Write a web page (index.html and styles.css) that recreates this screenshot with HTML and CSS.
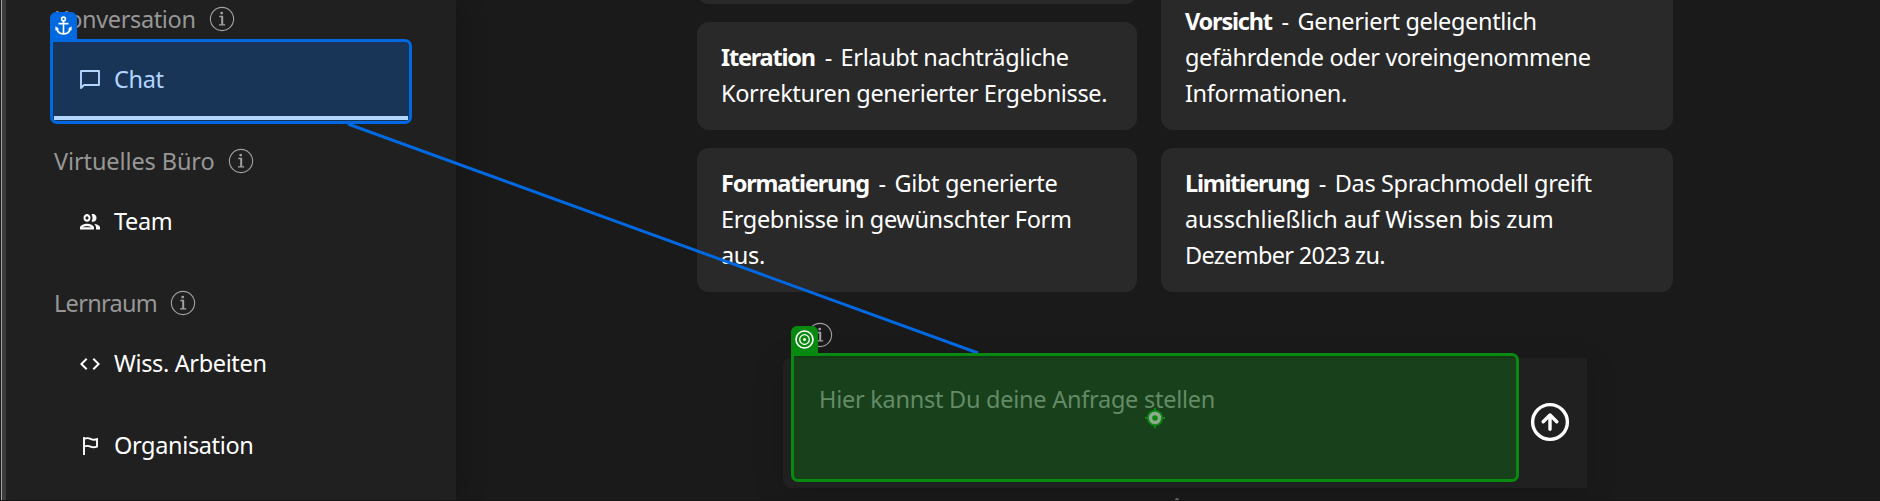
FILE: index.html
```html
<!DOCTYPE html>
<html lang="de">
<head>
<meta charset="utf-8">
<title>Chat</title>
<link rel="stylesheet" href="styles.css">
</head>
<body>
<svg class="defs" width="0" height="0">
  <symbol id="info" viewBox="0 0 26 26">
    <circle cx="13" cy="13" r="11.6" fill="none" stroke="currentColor" stroke-width="1.1"/>
    <circle cx="12.7" cy="7.1" r="1.4" fill="currentColor"/>
    <path d="M10.300 10.500H13.400V18.400M10 18.900H16.200" fill="none" stroke="currentColor" stroke-width="1.300"/>
    <path d="M13.200 10.200V18.800" stroke="currentColor" stroke-width="1.900"/>
  </symbol>
</svg>
<div class="app">
  <nav class="sidebar">
    <div class="label"><span>Konversation</span><svg class="info"><use href="#info"/></svg></div>
    <a class="item item-active">
      <svg class="icon" viewBox="0 0 24 24"><path d="M3 3H21V17H6L3 20Z" fill="none" stroke="currentColor" stroke-width="1.900" stroke-linejoin="round"/></svg>
      <span>Chat</span>
    </a>
    <div class="label"><span class="loose">Virtuelles Büro</span><svg class="info"><use href="#info"/></svg></div>
    <a class="item">
      <svg class="icon" viewBox="0 0 24 24"><path transform="translate(0 -1.400) scale(1 1.100)" fill="currentColor" d="M9 13.750c-2.340 0-7 1.170-7 3.500V19h14v-1.750c0-2.330-4.660-3.500-7-3.500zM4.340 17c.84-.58 2.870-1.250 4.660-1.250s3.820.67 4.660 1.250H4.340zM9 12c1.930 0 3.500-1.570 3.500-3.500S10.930 5 9 5 5.500 6.570 5.500 8.500 7.070 12 9 12zm0-5c.83 0 1.500.67 1.500 1.500S9.830 10 9 10s-1.500-.67-1.500-1.500S8.170 7 9 7zm7.040 6.810c1.160.84 1.960 1.960 1.960 3.440V19h4v-1.750c0-2.020-3.500-3.170-5.960-3.440zM15 12c1.930 0 3.500-1.570 3.500-3.500S16.930 5 15 5c-.54 0-1.040.13-1.500.35.63.89 1 1.980 1 3.150s-.37 2.260-1 3.150c.46.22.96.35 1.500.35z"/></svg>
      <span>Team</span>
    </a>
    <div class="label"><span class="tight">Lernraum</span><svg class="info"><use href="#info"/></svg></div>
    <a class="item">
      <svg class="icon" viewBox="0 0 24 24"><path fill="currentColor" d="M9.400 16.600 4.800 12l4.600-4.600L8 6l-6 6 6 6zm5.200 0 4.600-4.600-4.600-4.600L16 6l6 6-6 6z"/></svg>
      <span>Wiss. Arbeiten</span>
    </a>
    <a class="item">
      <svg class="icon" viewBox="0 0 24 24"><path d="M6 21V3M6 5C8.500 3.800 10.500 3.800 12.500 4.800S17 6 19 5.200V12.600C17 13.400 14.500 13.600 12.500 12.600S8.500 11.600 6 12.400" fill="none" stroke="currentColor" stroke-width="1.900"/></svg>
      <span>Organisation</span>
    </a>
  </nav>

  <main class="main">
    <section class="cards">
      <div class="column">
        <article class="card card-cut"></article>
        <article class="card"><b>Iteration</b> <span class="dash">-</span> Erlaubt nachträgliche<br>Korrekturen generierter Ergebnisse.</article>
        <article class="card"><b>Formatierung</b> <span class="dash">-</span> Gibt generierte<br>Ergebnisse in gewünschter Form<br>aus.</article>
      </div>
      <div class="column">
        <article class="card"><b>Vorsicht</b> <span class="dash">-</span> Generiert gelegentlich<br>gefährdende oder voreingenommene<br>Informationen.</article>
        <article class="card"><b>Limitierung</b> <span class="dash">-</span> Das Sprachmodell greift<br><span class="loose">ausschließlich auf Wissen bis zum</span><br><span class="tight">Dezember 2023 zu.</span></article>
      </div>
    </section>
    <div class="hint"><svg class="info"><use href="#info"/></svg></div>
    <form class="composer">
      <div class="field">Hier kannst Du deine Anfrage stellen</div>
      <svg class="send" viewBox="0 0 40 40"><circle cx="20" cy="20" r="17.400" /><path d="M20 27.300V13M13.200 19.800 20 13 26.800 19.800"/></svg>
    </form>
    <div class="footnote"></div>
  </main>
</div>

<svg class="link" viewBox="0 0 1880 501"><path d="M348 124 978 353"/></svg>

<div class="mark mark-anchor">
  <div class="tab"><svg viewBox="0 0 27 27"><circle cx="13.500" cy="7" r="1.900"/><path d="M13.500 9V22M8.500 11.600H18.500"/><path d="M6.800 15.600C7 19.500 9.500 21.800 13.500 21.900C17.500 21.800 20 19.500 20.200 15.600"/><path class="tip" d="M5.400 18.500V14.300L9.300 17.200ZM21.600 18.500V14.300L17.700 17.200Z"/></svg></div>
</div>
<div class="mark mark-target">
  <div class="tab"><svg viewBox="0 0 27 27"><circle cx="13.500" cy="13.500" r="8.500"/><circle cx="13.500" cy="13.500" r="4.800" stroke-width="1.300"/><circle class="tip" cx="13.500" cy="13.500" r="1.500"/></svg></div>
  <svg class="cross" viewBox="0 0 20 20"><path d="M10 0V20M0 10H20" stroke="#078a0f" stroke-width="2"/><circle cx="10" cy="10" r="8" fill="#078a0f"/><circle cx="10" cy="10" r="4.500" fill="#078a0f" stroke="#93a893" stroke-width="3.400"/></svg>
</div>
</body>
</html>
```
FILE: styles.css
```css
* { box-sizing: border-box; }
body {
  margin: 0;
  width: 1880px;
  height: 501px;
  overflow: hidden;
  position: relative;
  background: #1a1a1a;
  color: #fff;
  font: 23.5px/36px "Noto Sans", "Open Sans", sans-serif;
  letter-spacing: -0.36px;
  white-space: nowrap;
}
.defs { position: absolute; }
.app { display: flex; height: 501px; border-bottom: 1px solid #151515; }

.sidebar {
  width: 456px;
  height: 500px;
  overflow: hidden;
  display: flex;
  flex-direction: column;
  background: linear-gradient(90deg, #1b1b1b 1px, #a0a3a3 1px 2px, #3a3c3c 2px 6px, #202020 6px);
  box-shadow: 0 0 28px rgba(0, 0, 0, .25);
}
.label {
  flex: none;
  height: 60px;
  padding: 20px 0 0 54px;
  display: flex;
  align-items: center;
  gap: 13px;
  color: #979797;
}
.label:first-child { margin-top: -21px; }
.info { width: 26px; height: 26px; color: #a2a2a2; flex: none; }
.item {
  flex: none;
  height: 82px;
  padding-left: 78px;
  display: flex;
  align-items: center;
  gap: 12px;
}
.item span { padding-bottom: 3px; }
.icon { width: 24px; height: 24px; }
.item-active {
  position: relative;
  z-index: 1;
  margin: 0 48px 0 54px;
  padding-left: 24px;
  color: #b3d6ff;
}
.item-active::after {
  content: "";
  position: absolute;
  left: 0;
  right: 0;
  bottom: 1px;
  height: 4px;
  background: #b3d6ff;
}
.loose { letter-spacing: -0.1px; }
.tight { letter-spacing: -0.7px; }

.main { flex: 1; height: 500px; display: flex; flex-direction: column; overflow: hidden; }
.cards {
  flex: none;
  height: 292px;
  padding-left: 241px;
  display: flex;
  gap: 24px;
  overflow: hidden;
}
.column { display: flex; flex-direction: column; justify-content: flex-end; gap: 18px; width: 440px; }
.column + .column { width: 512px; }
.card { flex: none; padding: 17px 24px 19px; border-radius: 12px; background: #292929; }
.card-cut { height: 108px; }
.card b { letter-spacing: -1.2px; }
.dash { margin: 0 3px 0 4px; }

.hint { flex: none; height: 66px; padding: 30px 0 0 351px; }
.hint .info { display: block; }
.composer {
  flex: none;
  width: 804px;
  height: 130px;
  margin-left: 327px;
  display: flex;
  background: #202020;
  border-radius: 8px 0 0 8px;
  box-shadow: 0 6px 32px rgba(0, 0, 0, .15);
}
.field { width: 747px; padding: 23px 0 0 36px; color: #8b8b8b; letter-spacing: -0.26px; }
.send { width: 40px; height: 40px; margin-top: 44px; fill: none; stroke: #fff; stroke-width: 3.4; stroke-linecap: round; stroke-linejoin: round; }
.footnote { width: 4px; height: 3px; margin: 10px 0 0 719px; border-radius: 2px 2px 0 0; background: #686868; }

/* annotation layer above the page */
.link { position: absolute; inset: 0; fill: none; stroke: #0068e0; stroke-width: 3; }
.mark { position: absolute; border: 3px solid; border-radius: 0 7px 7px 7px; }
.mark-anchor { left: 50px; top: 39px; width: 362px; height: 85px; border-color: #0068e0; background: #183558; }
.mark-target { left: 791px; top: 353px; width: 728px; height: 129px; border-color: #078a0f; background: rgba(7, 138, 15, .3); }
.tab { position: absolute; left: -3px; top: -30px; width: 27px; height: 27px; border-radius: 6px 6px 0 0; }
.mark-anchor .tab { background: #0068e0; }
.mark-target .tab { background: #078a0f; }
.tab svg { display: block; fill: none; stroke: #fff; stroke-width: 1.6; }
.tab .tip { fill: #fff; stroke: none; }
.cross { position: absolute; left: 351px; top: 51.5px; width: 20px; height: 20px; }
```
